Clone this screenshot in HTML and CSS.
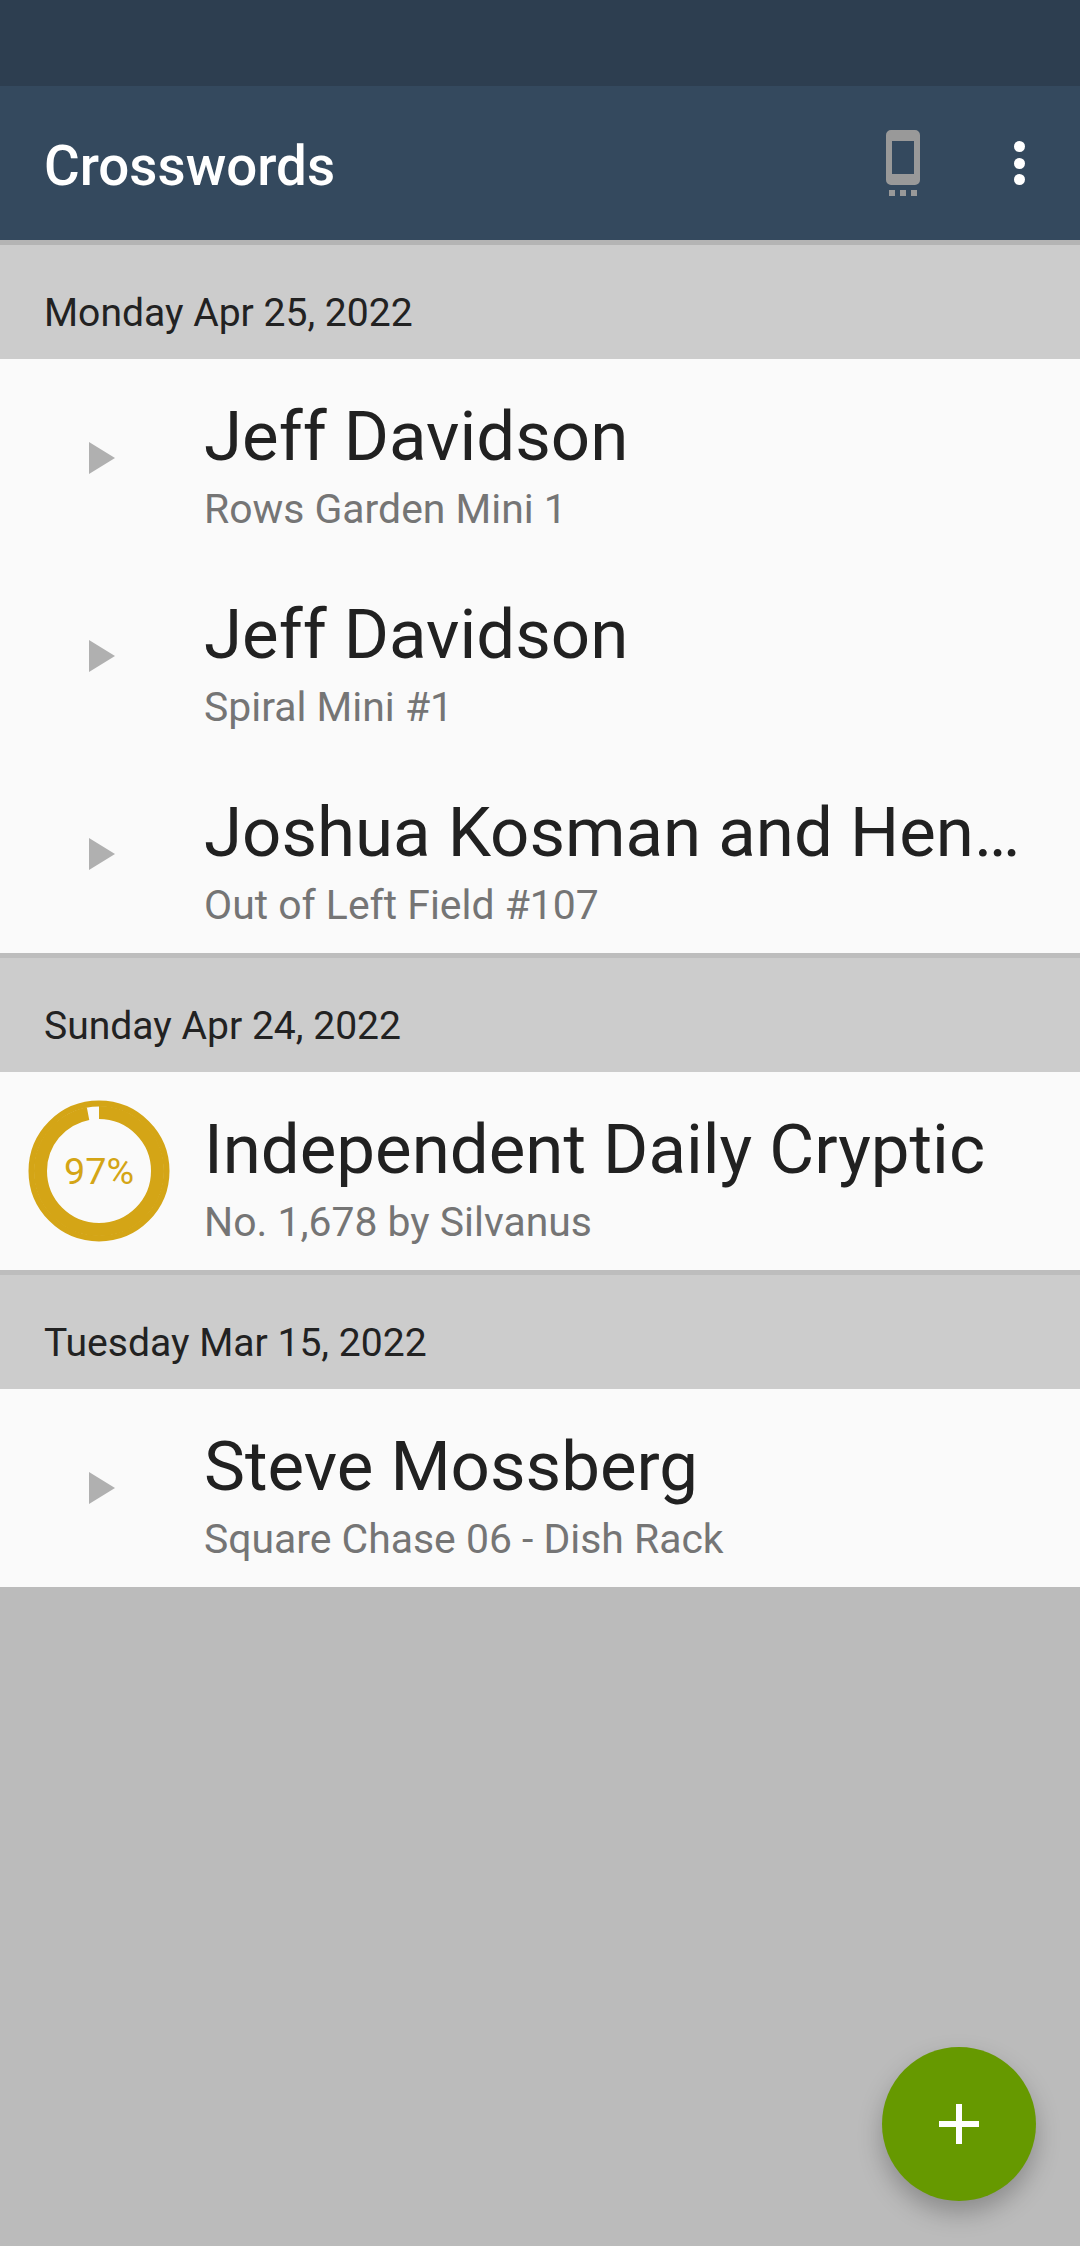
FILE: index.html
```html
<!DOCTYPE html>
<html lang="en">
<head>
<meta charset="UTF-8">
<meta name="viewport" content="width=device-width, initial-scale=1.0">
<title>Crosswords</title>
<link rel="stylesheet" href="styles.css">
</head>
<body>

<div class="status-bar"></div>

<header class="toolbar">
    <h1 class="toolbar-title">Crosswords</h1>
    <svg class="phone-icon" width="34" height="66" viewBox="0 0 34 66">
        <path fill="#999" fill-rule="evenodd" d="M5 0h24a5 5 0 0 1 5 5v45a5 5 0 0 1-5 5H5a5 5 0 0 1-5-5V5a5 5 0 0 1 5-5zM6 11v33h22V11z"/>
        <rect fill="#999" x="3" y="60" width="6" height="6"/>
        <rect fill="#999" x="14" y="60" width="6" height="6"/>
        <rect fill="#999" x="25" y="60" width="6" height="6"/>
    </svg>
    <div class="menu-dots">
        <span></span>
        <span></span>
        <span></span>
    </div>
</header>

<main class="list">
    <div class="date-header first">Monday Apr 25, 2022</div>
    <div class="puzzle">
        <div class="puzzle-status"><div class="play"></div></div>
        <div class="puzzle-text">
            <div class="puzzle-author">Jeff Davidson</div>
            <div class="puzzle-title">Rows Garden Mini 1</div>
        </div>
    </div>
    <div class="puzzle">
        <div class="puzzle-status"><div class="play"></div></div>
        <div class="puzzle-text">
            <div class="puzzle-author">Jeff Davidson</div>
            <div class="puzzle-title">Spiral Mini #1</div>
        </div>
    </div>
    <div class="puzzle">
        <div class="puzzle-status"><div class="play"></div></div>
        <div class="puzzle-text">
            <div class="puzzle-author">Joshua Kosman and Hen…</div>
            <div class="puzzle-title">Out of Left Field #107</div>
        </div>
    </div>

    <div class="date-header">Sunday Apr 24, 2022</div>
    <div class="puzzle">
        <div class="puzzle-status">
            <div class="progress">
                <svg width="142" height="142" viewBox="0 0 142 142">
                    <circle class="progress-track" cx="71" cy="71" r="67.5"/>
                    <circle class="progress-arc" cx="71" cy="71" r="58.5" pathLength="100" stroke-dasharray="97 3" transform="rotate(-90 71 71)"/>
                </svg>
                <span class="progress-label">97%</span>
            </div>
        </div>
        <div class="puzzle-text">
            <div class="puzzle-author">Independent Daily Cryptic</div>
            <div class="puzzle-title">No. 1,678 by Silvanus</div>
        </div>
    </div>

    <div class="date-header">Tuesday Mar 15, 2022</div>
    <div class="puzzle">
        <div class="puzzle-status"><div class="play"></div></div>
        <div class="puzzle-text">
            <div class="puzzle-author">Steve Mossberg</div>
            <div class="puzzle-title">Square Chase 06 - Dish Rack</div>
        </div>
    </div>
</main>

<button class="fab" aria-label="Add">
    <svg width="40" height="40" viewBox="0 0 40 40">
        <path fill="#fff" d="M17 0h6v17h17v6H23v17h-6V23H0v-6h17z"/>
    </svg>
</button>

</body>
</html>
```

FILE: styles.css
```css
body {
    font-family: 'Roboto', sans-serif;
    background-color: #bbbbbb;
    margin: 0;
    padding: 0;
    height: 2246px;
    overflow: hidden;
    position: relative;
}
.status-bar {
    height: 86px;
    background-color: #2d3e50;
}
.toolbar {
    height: 154px;
    background-color: #34495e;
    display: flex;
    align-items: center;
    padding: 0 55px 0 44px;
}
.toolbar-title {
    margin: 6px 0 0;
    flex: 1;
    color: #ffffff;
    font-size: 54.7px;
    font-weight: 500;
}
.phone-icon {
    margin-right: 94px;
}
.menu-dots {
    display: flex;
    flex-direction: column;
    gap: 5.5px;
}
.menu-dots span {
    width: 11px;
    height: 11px;
    border-radius: 50%;
    background-color: #ffffff;
}
.date-header {
    height: 119px;
    box-sizing: border-box;
    background-color: #cccccc;
    border-top: 5px solid #bdbdbd;
    padding: 0 44px 23px;
    display: flex;
    align-items: flex-end;
    font-size: 39.1px;
    line-height: 45px;
    color: #222222;
}
.date-header.first {
    border-top-color: #b4b4b4;
}
.puzzle {
    height: 198px;
    background-color: #fafafa;
    display: flex;
}
.puzzle-status {
    width: 204px;
    flex-shrink: 0;
    display: flex;
    align-items: center;
}
.play {
    width: 0;
    height: 0;
    margin-left: 89px;
    border-left: 26px solid #b0b0b0;
    border-top: 16.5px solid transparent;
    border-bottom: 16.5px solid transparent;
}
.progress {
    position: relative;
    width: 142px;
    height: 142px;
    margin-left: 28px;
}
.progress svg {
    display: block;
}
.progress-track, .progress-arc {
    fill: none;
    stroke: #d4a516;
}
.progress-track {
    stroke-width: 6;
}
.progress-arc {
    stroke-width: 13;
}
.progress-label {
    position: absolute;
    top: 0;
    left: 0;
    right: 0;
    line-height: 142px;
    text-align: center;
    font-size: 37.7px;
    color: #d4a516;
}
.puzzle-text {
    flex: 1;
    min-width: 0;
    padding: 38px 0 0 0;
}
.puzzle-author {
    font-size: 69px;
    line-height: 80px;
    color: #212121;
    white-space: nowrap;
}
.puzzle-title {
    font-size: 40.9px;
    line-height: 50px;
    margin-top: 7px;
    color: #757575;
}
.fab {
    position: absolute;
    left: 882px;
    top: 2047px;
    width: 154px;
    height: 154px;
    padding: 0;
    border: none;
    border-radius: 50%;
    background-color: #669900;
    display: flex;
    align-items: center;
    justify-content: center;
    box-shadow: 0 12px 24px rgba(0, 0, 0, 0.25);
}
```
